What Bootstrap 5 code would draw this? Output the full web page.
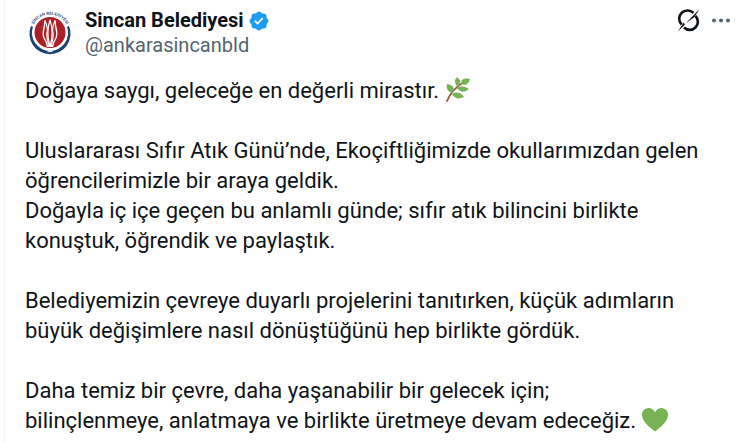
<!DOCTYPE html>
<html lang="tr">
<head>
<meta charset="utf-8">
<meta name="viewport" content="width=device-width, initial-scale=1">
<title>Sincan Belediyesi</title>
<link rel="stylesheet" href="https://cdn.jsdelivr.net/npm/bootstrap@5.3.0/dist/css/bootstrap.min.css">
<style>
body { font-family: Roboto, "Liberation Sans", sans-serif; color: #0f1419; background: #fff; }
.post { margin-left: 4px; border-left: 1px solid #eff3f4; padding: 8px 20px 6px; }
.avatar { width: 50px; height: 50px; }
.who { font-size: 20px; line-height: 25px; padding-left: 10px; }
.who a { color: inherit; }
.who .handle { color: #536471; }
.verified { width: 22px; height: 22px; }
.tool { line-height: 0; color: #0f1419; }
.tool-more { color: #536471; }
.post-text { font-size: 22px; line-height: 30px; margin-top: 18px; }
.post-text p { margin-bottom: 30px; }
.post-text p:last-child { margin-bottom: 0; }
.emoji { width: 26px; height: 26px; margin: -2px 0 2px; }
</style>
</head>
<body>
<main>
<article class="post min-vh-100">
  <header class="d-flex align-items-start">
    <a href="#" class="flex-shrink-0" aria-label="Sincan Belediyesi">
      <svg class="avatar d-block" viewBox="0 0 50 50">
        <defs><path id="rim" d="M6.500 22A18.800 18.800 0 0 1 43.500 22"/></defs>
        <path d="M6 18A20.500 20.500 0 1 0 44 18L42 19A18 18 0 1 1 8 19Z" fill="#1c4470"/>
        <path d="M6.500 32A20.500 20.500 0 0 0 43.500 32A19 17 0 0 1 6.500 32Z" fill="#1c4470"/>
        <circle cx="25" cy="24.500" r="17.500" fill="#fff"/>
        <circle cx="25" cy="24.500" r="15.500" fill="#ac2027"/>
        <text font-size="4" font-weight="700" fill="#1c4470" font-family="Liberation Sans, sans-serif"><textPath href="#rim" startOffset="50%" text-anchor="middle">SİNCAN BELEDİYESİ</textPath></text>
        <g fill="none" stroke="#fff" stroke-linecap="round">
          <path d="M20 13C20 20 16.500 24 19 30Q21.500 34 22.500 38" stroke-width="1.400"/>
          <path d="M30 13C30 20 33.500 24 31 30Q28.500 34 27.500 38" stroke-width="1.400"/>
          <path d="M20 13Q23.500 20 21.800 26Q22 33 24 37M30 13Q26.500 20 28.200 26Q28 33 26 37" stroke-width="1.200"/>
          <path d="M25 12C21.500 22 22.500 29 24.500 37M25 12C28.500 22 27.500 29 25.500 37" stroke-width="1.200"/>
          <path d="M22.500 38H27.500" stroke-width="2"/>
        </g>
        <path d="M22.500 43.500H27.500" stroke="#d6dfe8" stroke-width="1.300"/>
      </svg>
    </a>
    <div class="who flex-grow-1">
      <div class="d-flex align-items-center gap-1">
        <a href="#" class="fw-bold text-decoration-none">Sincan Belediyesi</a>
        <svg class="verified" viewBox="0 0 22 22" role="img" aria-label="Onaylı hesap"><path fill="#1d9bf0" d="M20.396 11c-.018-.646-.215-1.275-.57-1.816-.354-.54-.852-.972-1.438-1.246.223-.607.27-1.264.14-1.897-.131-.634-.437-1.218-.882-1.687-.47-.445-1.053-.75-1.687-.882-.633-.13-1.290-.083-1.897.14-.273-.587-.704-1.086-1.245-1.440S11.647 1.620 11 1.604c-.646.017-1.273.213-1.813.568s-.969.854-1.240 1.440c-.608-.223-1.267-.272-1.902-.14-.635.130-1.220.436-1.690.882-.445.470-.749 1.055-.878 1.688-.130.633-.080 1.290.144 1.896-.587.274-1.087.705-1.443 1.245-.356.540-.555 1.170-.574 1.817.020.647.218 1.276.574 1.817.356.540.856.972 1.443 1.245-.224.606-.274 1.263-.144 1.896.130.634.433 1.218.877 1.688.470.443 1.054.747 1.687.878.633.132 1.290.084 1.897-.136.274.586.705 1.084 1.246 1.439.540.354 1.170.551 1.816.569.647-.016 1.276-.213 1.817-.567s.972-.854 1.245-1.440c.604.239 1.266.296 1.903.164.636-.132 1.220-.447 1.680-.907.460-.460.776-1.044.908-1.681s.075-1.299-.165-1.903c.586-.274 1.084-.705 1.439-1.246.354-.540.551-1.170.569-1.816z"/><path fill="#fff" d="M9.662 14.850l-3.429-3.428 1.293-1.302 2.072 2.072 4.400-4.794 1.347 1.246z"/></svg>
      </div>
      <a href="#" class="handle d-block text-decoration-none">@ankarasincanbld</a>
    </div>
    <div class="d-flex align-items-center gap-2">
      <button type="button" class="tool btn p-0 border-0" aria-label="Grok">
        <svg width="24" height="24" viewBox="0 0 24 24" fill="none"><path d="M16.500 5A7.800 7.800 0 0 0 4.500 16.500M7 19.500A7.800 7.800 0 0 0 18.500 8" stroke="currentColor" stroke-width="2.600"/><path d="M22.500 1L9 15L15.500 10.500L17.500 9Z" fill="currentColor"/><path d="M1 23.500L6.500 14.500L8 16.500Z" fill="currentColor"/></svg>
      </button>
      <button type="button" class="tool tool-more btn p-0 border-0" aria-label="Diğer">
        <svg width="22" height="24" viewBox="0 0 22 24" fill="currentColor"><circle cx="5" cy="12.500" r="2"/><circle cx="12" cy="12.500" r="2"/><circle cx="19" cy="12.500" r="2"/></svg>
      </button>
    </div>
  </header>
  <div class="post-text">
    <p>Doğaya saygı, geleceğe en değerli mirastır. <svg class="emoji" viewBox="0 0 26 26" role="img" aria-label="Dal"><path d="M2 24Q7 12 19 5" fill="none" stroke="#a3563f" stroke-width="1.800" stroke-linecap="round"/><g fill="#77b255"><path d="M13 10Q7.500 5 12 0Q18 5 13 10Z"/><path d="M16 7Q16 0 25 2Q23 10 16 7Z"/><path d="M8 16Q0 14 2 7Q11 8 8 16Z"/><path d="M12 11Q17 7 24 12Q17 18 12 11Z"/><path d="M7 17Q14 13 19 20Q11 24 7 17Z"/></g></svg></p>
    <p>Uluslararası Sıfır Atık Günü’nde, Ekoçiftliğimizde okullarımızdan gelen öğrencilerimizle bir araya geldik.<br>Doğayla iç içe geçen bu anlamlı günde; sıfır atık bilincini birlikte<br>konuştuk, öğrendik ve paylaştık.</p>
    <p>Belediyemizin çevreye duyarlı projelerini tanıtırken, küçük adımların<br>büyük değişimlere nasıl dönüştüğünü hep birlikte gördük.</p>
    <p>Daha temiz bir çevre, daha yaşanabilir bir gelecek için;<br>bilinçlenmeye, anlatmaya ve birlikte üretmeye devam edeceğiz. <svg class="emoji" viewBox="0 0 26 26" role="img" aria-label="Yeşil kalp"><path fill="#77b255" d="M13 24.500C7 20 0 14 0 8A6.700 6.700 0 0 1 13 5.500A6.700 6.700 0 0 1 26 8C26 14 19 20 13 24.500Z"/></svg></p>
  </div>
</article>
</main>
<script src="https://cdn.jsdelivr.net/npm/bootstrap@5.3.0/dist/js/bootstrap.bundle.min.js"></script>
</body>
</html>
